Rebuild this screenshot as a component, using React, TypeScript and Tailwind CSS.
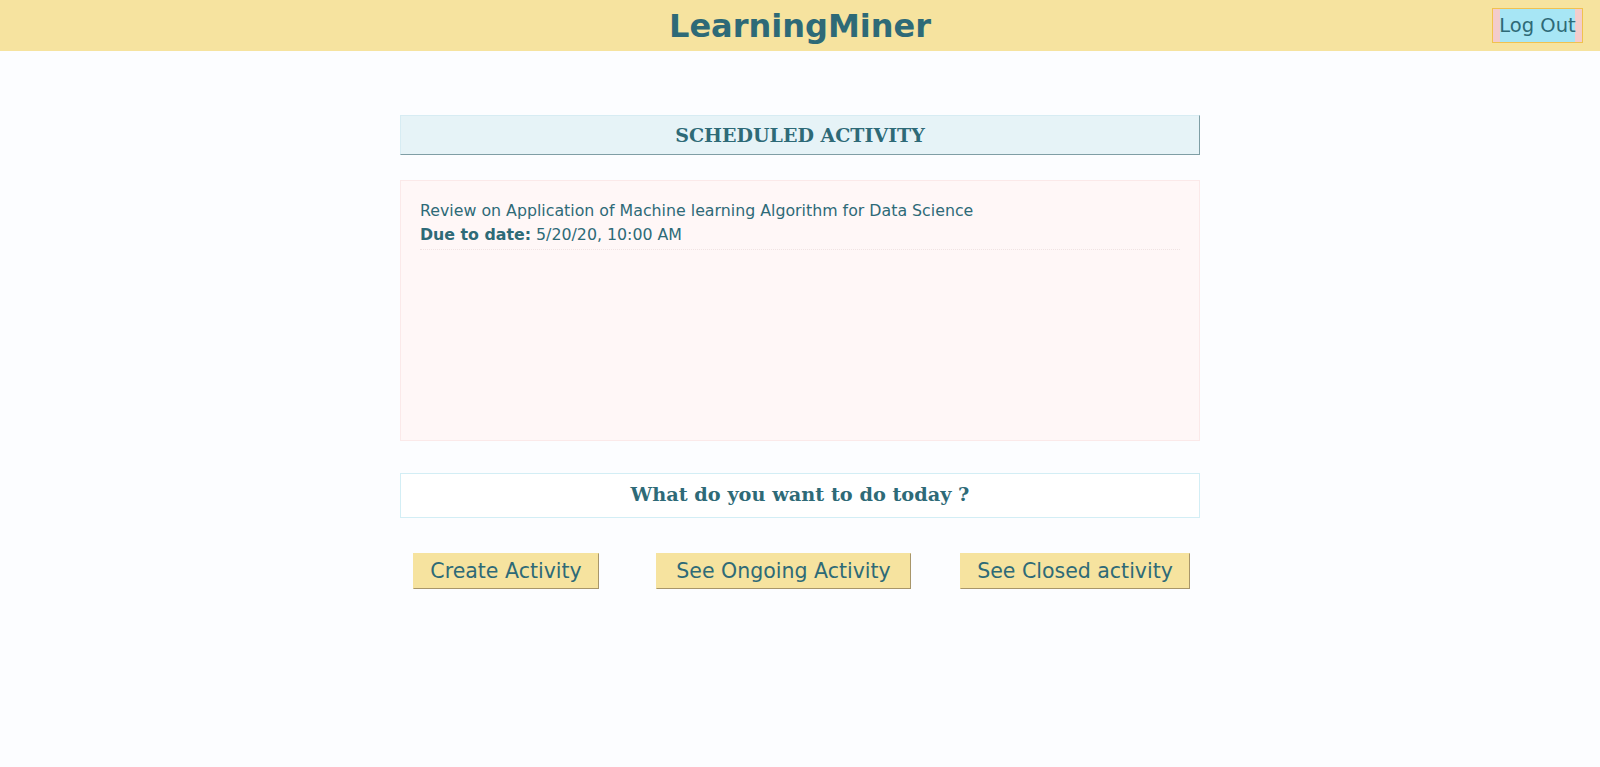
import React from "react";

const sans = { fontFamily: '"DejaVu Sans", "Open Sans", sans-serif' };
const serif = { fontFamily: '"DejaVu Serif", "Liberation Serif", serif' };

export default function App() {
  return (
    <div className="min-h-[767px] bg-[#fcfdff] text-[#2e6a77]" style={sans}>
      <header className="relative h-[51px] bg-[#f6e39f] flex items-center justify-center">
        <h1 className="text-[32px] font-bold text-[#2e6a77]">LearningMiner</h1>
        <button className="absolute right-[17px] top-[8px] h-[35px] w-[91px] border border-[#f1c24e] bg-[#f3cccc] px-[7px]">
          <span className="flex h-full w-full items-center justify-center overflow-visible whitespace-nowrap bg-[#a7e6f5] text-[19.5px] text-[#2e6a77]">Log Out</span>
        </button>
      </header>
      <main className="mx-auto w-[800px] pt-[64px]">
        <div className="h-[40px] flex items-center justify-center bg-[#e6f3f7] border border-[#d7ecf3] border-b-[#7f9ea5] border-r-[#7f9ea5]">
          <h2 className="text-[19px] font-bold text-[#2e6a77]" style={serif}>SCHEDULED ACTIVITY</h2>
        </div>
        <div className="mt-[25px] h-[261px] bg-[#fff7f7] border border-[#fbe9e9] px-[19px] pt-[18px]">
          <div className="border-b border-dotted border-[#f0e3e3] pb-[2px] text-[15.8px] leading-[24px]">
            <div>Review on Application of Machine learning Algorithm for Data Science</div>
            <div><span className="font-bold">Due to date:</span> 5/20/20, 10:00 AM</div>
          </div>
        </div>
        <div className="mt-[32px] h-[45px] flex items-center justify-center bg-white border border-[#d3eef5]">
          <h2 className="text-[19.3px] font-bold text-[#2e6a77]" style={serif}>What do you want to do today ?</h2>
        </div>
        <div className="mt-[35px] flex items-start pl-[13px]">
          <button className="h-[36px] w-[186px] bg-[#f6e39f] border border-[#f6e39f] border-b-[#a8966a] border-r-[#a8966a] text-[20.5px] text-[#2e6a77]">Create Activity</button>
          <button className="ml-[57px] h-[36px] w-[255px] bg-[#f6e39f] border border-[#f6e39f] border-b-[#a8966a] border-r-[#a8966a] text-[20.5px] text-[#2e6a77]">See Ongoing Activity</button>
          <button className="ml-[49px] h-[36px] w-[230px] bg-[#f6e39f] border border-[#f6e39f] border-b-[#a8966a] border-r-[#a8966a] text-[20.5px] text-[#2e6a77]">See Closed activity</button>
        </div>
      </main>
    </div>
  );
}
